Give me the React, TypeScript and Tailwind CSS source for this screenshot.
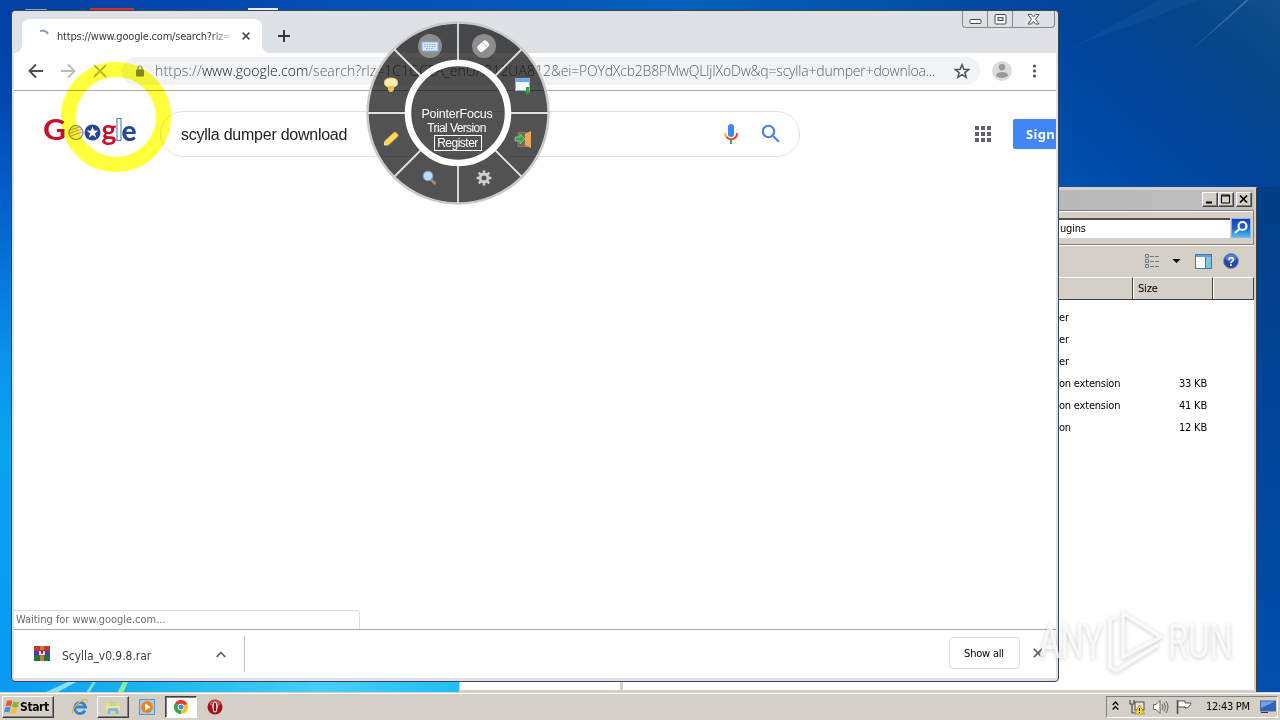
import React from "react";

const tahoma = "font-['DejaVu_Sans_Condensed','Noto_Sans',sans-serif] [font-stretch:condensed]";

function Wallpaper() {
  return (
    <svg className="absolute inset-0" width="1280" height="720">
      <defs>
        <linearGradient id="wl" x1="0" y1="0" x2="0" y2="1">
          <stop offset="0" stopColor="#033fa3" />
          <stop offset="0.14" stopColor="#0248b0" />
          <stop offset="0.32" stopColor="#0468d0" />
          <stop offset="0.5" stopColor="#0b93e8" />
          <stop offset="0.62" stopColor="#0aa4f0" />
          <stop offset="1" stopColor="#0a98f2" />
        </linearGradient>
        <linearGradient id="wt" x1="0" y1="0" x2="1" y2="0">
          <stop offset="0" stopColor="#0340a3" />
          <stop offset="0.35" stopColor="#0650b4" />
          <stop offset="0.65" stopColor="#0560b8" />
          <stop offset="1" stopColor="#03459a" />
        </linearGradient>
        <linearGradient id="wr" x1="0" y1="1" x2="1" y2="0">
          <stop offset="0" stopColor="#0052b2" />
          <stop offset="0.45" stopColor="#01449a" />
          <stop offset="0.75" stopColor="#054588" />
          <stop offset="1" stopColor="#12508c" />
        </linearGradient>
        <linearGradient id="we" x1="0" y1="0" x2="0" y2="1">
          <stop offset="0" stopColor="#023e86" />
          <stop offset="0.5" stopColor="#00459a" />
          <stop offset="1" stopColor="#0250ae" />
        </linearGradient>
        <linearGradient id="wb" x1="0" y1="0" x2="1" y2="0">
          <stop offset="0" stopColor="#0a9af2" />
          <stop offset="0.3" stopColor="#18b4ee" />
          <stop offset="0.7" stopColor="#48cef8" />
          <stop offset="1" stopColor="#22bcf6" />
        </linearGradient>
      </defs>
      <rect width="1280" height="720" fill="#00459a" />
      <rect width="20" height="720" fill="url(#wl)" />
      <rect width="1059" height="12" fill="url(#wt)" />
      <rect x="1058" width="222" height="190" fill="url(#wr)" />
      <rect x="1250" y="187" width="30" height="510" fill="url(#we)" />
      <rect y="680" width="460" height="14" fill="url(#wb)" />
      <path d="M44 693L72 680H80L56 693Z" fill="#b5e8fb" opacity=".8" />
      <path d="M86 693L94 680H97L89 693Z" fill="#8cdcf8" />
      <path d="M117 693L124 680H129L123 693Z" fill="#8ee6a8" />
      <path d="M1186 55L1246 0H1249Z" fill="#6d9cca" opacity=".45" />
      <path d="M1070 48L1160 0H1200Z" fill="#1d66a8" opacity=".25" />
      <rect x="90" y="8" width="44" height="3" fill="#d2322a" />
      <rect x="25" y="9" width="22" height="2" fill="#8ca6c8" />
      <rect x="248" y="8" width="30" height="3" fill="#e6eef6" />
    </svg>
  );
}

function ClassicButton({ children }: { children: React.ReactNode }) {
  return (
    <div className="flex h-[15px] w-4 items-center justify-center border border-b-[#404040] border-l-white border-r-[#404040] border-t-white bg-[#d4d0c8] shadow-[inset_-1px_-1px_0_#808080]">
      <svg width="14" height="13" viewBox="0 0 14 13" fill="none" stroke="#000">
        {children}
      </svg>
    </div>
  );
}

const rows = [
  ["er", ""],
  ["er", ""],
  ["er", ""],
  ["on extension", "33 KB"],
  ["on extension", "41 KB"],
  ["on", "12 KB"],
];

function Explorer() {
  return (
    <div className={`absolute left-[459px] top-[187px] flex h-[506px] w-[798px] flex-col border border-b-[#d4d0c8] border-l-[#d4d0c8] border-r-[#404040] border-t-[#d4d0c8] bg-[#d4d0c8] pr-[2px] text-[11px] tracking-[-0.2px] text-black ${tahoma}`}>
      <div className="mt-[2px] flex h-5 items-center justify-end bg-gradient-to-r from-[#808080] via-[#b0b0b0] to-[#c0c0c0] pb-[1px] pr-[2px]">
        <ClassicButton><path d="M3 9.5h6" strokeWidth="2" /></ClassicButton>
        <ClassicButton><path d="M2.500 2h8v8h-8zM2 3h9" /></ClassicButton>
        <div className="w-[2px]" />
        <ClassicButton><path d="M3 2.500l7 7M10 2.500l-7 7" strokeWidth="1.700" /></ClassicButton>
      </div>
      <div className="flex h-[35px] items-center justify-end border-y border-r border-[#808080] pr-[2px] shadow-[inset_0_1px_0_#fff,0_1px_0_#fff]">
        <div className="flex h-5 flex-1 items-center border-t-2 border-[#505050] bg-white pl-[600px] pt-[1px]">ugins</div>
        <div className="ml-[1px] flex h-5 w-5 items-center justify-center border border-[#8ab4e8] bg-gradient-to-b from-[#1c3fb8] via-[#2060d0] to-[#4ec0f0]">
          <svg width="18" height="18" viewBox="0 0 18 18" fill="none" stroke="#fff" strokeWidth="2.200">
            <circle cx="10.500" cy="7" r="4" />
            <path d="M7.500 10L3 14" />
          </svg>
        </div>
      </div>
      <div className="flex h-8 items-center justify-end pr-[15px]">
        <svg width="16" height="14" viewBox="0 0 16 14" fill="none" stroke="#6c7888">
          <path d="M1.500.5h3v3h-3zM1.500 5.500h3v3h-3zM1.500 10.500h3v3h-3z" />
          <path d="M6 2.500h4m1 0h4M6 7.500h4m1 0h4M6 12.500h4m1 0h4" />
        </svg>
        <svg className="ml-3" width="9" height="5"><path d="M.5 0h8l-4 4z" fill="#000" /></svg>
        <svg className="ml-[14px]" width="17" height="15" viewBox="0 0 17 15">
          <rect x=".5" y=".5" width="16" height="14" fill="#fff" stroke="#4a74a8" />
          <rect x="1" y="1" width="15" height="2" fill="#6a9cd0" />
          <rect x="11" y="3" width="5" height="11" fill="#7cc8e0" />
          <path d="M10.500 3v11" stroke="#4a74a8" />
        </svg>
        <svg className="ml-[11px]" width="16" height="16" viewBox="0 0 16 16">
          <circle cx="8" cy="8" r="7.500" fill="#2448a8" stroke="#8090b0" />
          <ellipse cx="8" cy="5" rx="5.500" ry="3.500" fill="#5880d8" />
          <text x="8" y="12.500" textAnchor="middle" fontSize="12" fontWeight="700" fill="#fff" fontFamily="Liberation Sans">?</text>
        </svg>
      </div>
      <div className="flex h-[23px] items-center justify-end border-b border-[#404040]">
        <div className="h-full w-[79px] border-r border-t border-r-[#404040] border-t-white" />
        <div className="flex h-full w-20 items-center border-l border-r border-t border-l-white border-r-[#404040] border-t-white pl-1 pt-[2px]">Size</div>
        <div className="h-full w-[41px] border-l border-r border-t border-l-white border-r-[#404040] border-t-white" />
      </div>
      <div className="flex min-h-0 flex-1">
        <div className="w-40 bg-white" />
        <div className="w-[3px] bg-[#d4d0c8]" />
        <div className="flex-1 bg-white pt-[7px]">
          {rows.map(([type, size], i) => (
            <div key={i} className="flex h-[22px] items-center justify-end pr-[47px]">
              <span className="w-[100px]">{type}</span>
              <span className="w-[48px] text-right">{size}</span>
            </div>
          ))}
        </div>
      </div>
      <div className="h-[2px]" />
    </div>
  );
}

function TabStrip() {
  return (
    <div className="flex h-[42px] items-start bg-[#dee1e6]">
      <div className="h-full w-2 pt-[34px]">
        <svg width="8" height="8"><path d="M8 0v8H0a8 8 0 0 0 8-8z" fill="#fff" /></svg>
      </div>
      <div className="mt-2 flex h-[34px] w-[240px] items-center rounded-t-lg bg-white pl-[14px]">
        <svg width="14" height="14" viewBox="0 0 14 14" fill="none"><path d="M4 2.200A6 6 0 0 1 12 5" stroke="#8a9ab8" strokeWidth="2" /></svg>
        <div className={`ml-[7px] w-[173px] overflow-hidden whitespace-nowrap bg-gradient-to-r from-[#303338] from-88% to-white to-[102%] bg-clip-text pt-[2px] text-[11px] tracking-[-0.21px] text-transparent ${tahoma}`}>
          https://www.google.com/search?rlz=
        </div>
        <svg className="ml-[12px]" width="8" height="8" viewBox="0 0 9 9"><path d="M.7.700l7.600 7.600M8.300.7L.7 8.300" stroke="#4a4d52" strokeWidth="1.800" /></svg>
      </div>
      <div className="h-full w-2 pt-[34px]">
        <svg width="8" height="8"><path d="M0 0v8h8a8 8 0 0 1-8-8z" fill="#fff" /></svg>
      </div>
      <svg className="ml-2 mt-[19px]" width="12" height="12"><path d="M6 0v12M0 6h12" stroke="#303338" strokeWidth="1.900" /></svg>
      <div className="flex-1" />
      <div className="mr-[1px] flex h-[17px] w-[93px] rounded-b-[4px] border border-t-0 border-[#85888e]">
        <div className="flex w-[25px] items-center justify-center border-r border-[#85888e] pt-[5px]">
          <svg width="13" height="6"><rect x="1" y=".5" width="11" height="4" rx="1" fill="#fff" stroke="#44474f" /></svg>
        </div>
        <div className="flex w-[25px] items-center justify-center border-r border-[#85888e]">
          <svg width="13" height="11"><rect x="1" y=".5" width="11" height="9.500" rx="1" fill="#fff" stroke="#44474f" /><rect x="4" y="3.500" width="5" height="3" fill="#dee1e6" stroke="#44474f" /></svg>
        </div>
        <div className="flex flex-1 items-center justify-center">
          <svg width="13" height="11" viewBox="0 0 13 11"><path d="M1 .5h3.500L6.500 3l2-2.500H12L8.500 5.200 12 10H8.500l-2-2.600L4.500 10H1l3.500-4.800z" fill="#fff" stroke="#44474f" strokeWidth=".9" /></svg>
        </div>
      </div>
    </div>
  );
}

function Toolbar() {
  return (
    <div className="flex h-[38px] items-center border-b border-[#a9aaac] bg-white pl-[14px]">
      <svg className="-mt-[2px]" width="16" height="16" viewBox="0 0 16 16" fill="none" stroke="#4d5156" strokeWidth="2"><path d="M15 8H2M8 1.500L1.500 8 8 14.500" /></svg>
      <svg className="-mt-[2px] ml-4" width="16" height="16" viewBox="0 0 16 16" fill="none" stroke="#b9bbbe" strokeWidth="1.900"><path d="M1 8h13M8 1.500L14.500 8 8 14.500" /></svg>
      <svg className="-mt-[2px] ml-[17px]" width="14" height="14" viewBox="0 0 14 14" stroke="#b4b6b8" strokeWidth="1.800"><path d="M1 1l12 12M13 1L1 13" /></svg>
      <div className="-mt-px ml-[15px] flex h-7 w-[858px] items-center rounded-full bg-[#f1f3f4] pl-[13px]">
        <svg width="10" height="12" viewBox="0 0 10 12"><rect x="1" y="4.500" width="8" height="7" rx="1" fill="#85888c" /><path d="M3 5V3a2 2 0 0 1 4 0v2" fill="none" stroke="#85888c" strokeWidth="1.200" /></svg>
        <div className="ml-[10px] w-[790px] whitespace-nowrap pb-[1px] font-['Open_Sans',sans-serif] text-[14px] font-light text-[#5f6368]">
          <span className="tracking-[0.2px]">https://</span>
          <span className="tracking-[0.02px] text-[#202124]">www.google.com</span>
          <span className="tracking-[0.02px]">/search?rlz=1C1GCEA_enUA812UA812</span>
          <span className="tracking-[-0.19px]">&amp;ei=POYdXcb2B8PMwQLljIXoDw&amp;q=scylla+dumper+downloa...</span>
        </div>
        <svg className="ml-[9px]" width="16" height="16" viewBox="0 0 16 16"><path d="M8 1.700l1.800 4.500 4.900.3-3.800 3.100 1.300 4.700L8 11.700l-4.200 2.600 1.300-4.700L1.300 6.500l4.900-.3z" fill="none" stroke="#505358" strokeWidth="1.500" /></svg>
      </div>
      <svg className="-mt-px ml-3" width="20" height="20" viewBox="0 0 20 20"><circle cx="10" cy="10" r="10" fill="#dcdcdc" /><circle cx="10" cy="6.200" r="3.200" fill="#9a9a9a" /><ellipse cx="10" cy="14" rx="6" ry="3" fill="#9a9a9a" /></svg>
      <svg className="-mt-px ml-5" width="5" height="14" viewBox="0 0 5 14" fill="#4d5156"><circle cx="2.500" cy="2" r="1.600" /><circle cx="2.500" cy="7" r="1.600" /><circle cx="2.500" cy="12" r="1.600" /></svg>
    </div>
  );
}

function Doodle() {
  return (
    <svg className="shrink-0 overflow-visible" width="94" height="48" viewBox="0 0 94 48" fontFamily="Lato, sans-serif">
      <text x="0" y="30" fontSize="29" fontWeight="700" fill="#c8102e" textLength="23" lengthAdjust="spacingAndGlyphs">G</text>
      <circle cx="33" cy="22.500" r="7" fill="#f3eedc" stroke="#85857c" strokeWidth="1.200" />
      <path d="M27 20l10-3M27 23l12-4M28 26l11-4" stroke="#c0a058" strokeWidth="1.200" />
      <circle cx="49.500" cy="22.500" r="8" fill="#24479a" />
      <path d="M49.500 16.500l1.500 4.100 4.300.1-3.400 2.600 1.200 4.200-3.600-2.500-3.600 2.500 1.200-4.200-3.400-2.600 4.300-.1z" fill="#fff" />
      <text x="58.500" y="30" fontSize="28" fontWeight="700" fill="#c8102e" textLength="15" lengthAdjust="spacingAndGlyphs">g</text>
      <rect x="74" y="8.500" width="4" height="22" fill="#fff" stroke="#5f78b0" strokeWidth="1.100" />
      <text x="78.500" y="30.500" fontSize="28" fontWeight="900" fill="#24479a" textLength="15" lengthAdjust="spacingAndGlyphs">e</text>
    </svg>
  );
}

function Page() {
  return (
    <div className="flex min-h-0 flex-1 flex-col justify-between overflow-hidden bg-white">
      <div className="mt-[19px] flex h-[48px] items-center pl-[29px]">
        <Doodle />
        <div className="ml-[23px] flex h-[46px] w-[640px] shrink-0 items-center rounded-full border border-[#dfe1e5] pl-[20px]">
          <span className="w-[538px] pt-[1px] font-['Liberation_Sans',sans-serif] text-[16px] tracking-[-0.25px] text-[#222]">scylla dumper download</span>
          <svg width="24" height="24" viewBox="0 0 24 24" fill="none" strokeWidth="2">
            <rect x="9" y="2" width="6" height="13" rx="3" fill="#4285f4" />
            <path d="M12 18v4" stroke="#34a853" />
            <path d="M6 11a6 6 0 0 0 2 4.500" stroke="#fbbc05" />
            <path d="M7.500 15.200A6 6 0 0 0 18 11" stroke="#ea4335" />
          </svg>
          <svg className="ml-[18px]" width="20" height="20" viewBox="0 0 20 20" fill="none" stroke="#4a7fe0" strokeWidth="2.100"><circle cx="7.500" cy="7.500" r="5.700" /><path d="M11.800 11.800l6 6" /></svg>
        </div>
        <svg className="ml-[175px] shrink-0" width="16" height="16" fill="#5f6368">
          {[0, 6, 12].map((y) => [0, 6, 12].map((x) => <rect key={`${x}-${y}`} x={x} y={y} width="4" height="4" />))}
        </svg>
        <div className="ml-[22px] flex h-[30px] w-[96px] shrink-0 items-center rounded-[2px] bg-[#4285f4] pl-[13px] pt-[2px] font-['Noto_Sans',sans-serif] text-[13px] font-bold tracking-[0.3px] text-white">Sign</div>
      </div>
      <div className={`flex h-[19px] w-[346px] items-center rounded-tr border-r border-t border-[#dadce0] pl-[2px] pt-[1px] text-[11px] tracking-[-0.04px] text-[#6a6d72] ${tahoma}`}>
        Waiting for www.google.com...
      </div>
    </div>
  );
}

function RarIcon() {
  return (
    <svg className="-mt-[3px]" width="16" height="16" viewBox="0 0 16 16">
      <rect width="16" height="5" y="1" fill="#c03830" />
      <rect width="16" height="5" y="6" fill="#3a4aa8" />
      <rect width="16" height="5" y="11" fill="#207838" />
      <path d="M6 1h4v15H6z" fill="#c87840" />
      <rect x="4.500" y="5" width="7" height="6" fill="#8a3030" />
      <path d="M6 6v3.500h4V6" fill="none" stroke="#fff" strokeWidth="1.500" />
    </svg>
  );
}

function Shelf() {
  return (
    <div className={`flex h-[49px] items-center border-t border-[#a9aaac] bg-white pl-5 text-[#3c4043] ${tahoma}`}>
      <RarIcon />
      <span className="ml-3 w-[154px] pt-[3px] text-[12px] tracking-[-0.05px]">Scylla_v0.9.8.rar</span>
      <svg width="10" height="7" viewBox="0 0 10 7" fill="none" stroke="#5f6368" strokeWidth="1.800"><path d="M.7 6L5 1.500 9.300 6" /></svg>
      <div className="ml-[18px] h-9 w-px bg-[#c0c2c5]" />
      <div className="flex-1" />
      <div className="-mt-[2px] flex h-8 w-[71px] items-center justify-center rounded border border-[#dadce0] pr-[1px] pt-[2px] text-[11px] tracking-[-0.2px] text-black">Show all</div>
      <svg className="-mt-[2px] ml-[13px] mr-[13px]" width="10" height="10" viewBox="0 0 10 10"><path d="M.8.800l8.400 8.400M9.200.8L.8 9.200" stroke="#5f6368" strokeWidth="1.700" /></svg>
    </div>
  );
}

function Browser() {
  return (
    <div className="absolute left-[11px] top-[10px] flex h-[672px] w-[1048px] flex-col rounded-[4px] border border-[#3c4450] bg-[#dee1e6] px-[2px] pb-[3px]">
      <TabStrip />
      <Toolbar />
      <Page />
      <Shelf />
    </div>
  );
}

function Wheel() {
  return (
    <div className="absolute left-[366px] top-[21px] flex h-[184px] w-[184px] flex-col items-center pt-[86px] font-['Liberation_Sans',sans-serif] text-white">
      <svg className="absolute inset-0" width="184" height="184" viewBox="-92 -92 184 184">
        <circle r="90.500" fill="#000" fillOpacity=".68" stroke="#c9c9c9" strokeWidth="2.500" />
        <g stroke="#e2e2e2" strokeWidth="1.800">
          <path d="M0-90v40M0 50v40M-90 0h40M50 0h40M-63.500-63.500l26 26M63.500-63.500l-26 26M-63.500 63.500l26-26M63.500 63.500l-26-26" />
        </g>
        <circle r="50" fill="none" stroke="#fff" strokeWidth="6.500" />
        <circle cx="-28" cy="-67" r="12" fill="#8d8d8d" />
        <circle cx="26" cy="-67" r="12" fill="#8d8d8d" />
        <rect x="-36" y="-71" width="16" height="9" fill="#dceafa" stroke="#8ab4e6" />
        <path d="M-34-68.500h12M-34-66.500h12M-32-64.500h8" stroke="#88aeda" strokeDasharray="1.500 1" />
        <g transform="translate(25 -67) rotate(-42)"><rect x="-6" y="-3.500" width="12" height="7.500" rx="2.500" fill="#fff" /><path d="M2-3.500v7" stroke="#c8c8c8" /></g>
        <path d="M-70-26a4 4 0 0 1-3.500-4.500q0-4.500 6.500-4.500t6.500 4.500a4 4 0 0 1-3.500 4.500z" fill="#ffeeb8" stroke="#f0c860" />
        <path d="M-70-27h6v4l-2 2h-2l-2-2z" fill="#f0c040" />
        <g transform="translate(-67 26) rotate(-42)"><rect x="-7" y="-2.800" width="15" height="5.600" rx="1.500" fill="#ffd860" stroke="#d8a030" strokeWidth=".8" /><path d="M-7-2.500L-9.500 0l2.500 2.500z" fill="#f0e8d0" /></g>
        <rect x="57.500" y="-34.500" width="14" height="12" fill="#f4faff" stroke="#88b0dc" />
        <rect x="58" y="-34" width="13" height="3" fill="#6aa8e8" />
        <path d="M68-26h3v4h2l-3.500 3.500L66-22h2z" fill="#32a832" />
        <path d="M60 19.500h11v14H60z" fill="#75695e" stroke="#8c7860" /><path d="M67 21l6-3v17l-6-3z" fill="#eaa858" />
        <path d="M57 24h5v-3l5 5-5 5v-3h-5z" fill="#38a840" stroke="#a8e0a0" strokeWidth=".6" />
        <circle cx="-30" cy="63" r="4.800" fill="#b8dcfa" stroke="#78a8dc" />
        <path d="M-26.500 67l4 4" stroke="#b08a60" strokeWidth="2.500" />
        <g transform="translate(26 65)" stroke="#cfcfcf" fill="none"><circle r="4" strokeWidth="2.800" /><path d="M0-7.500v3M0 4.500v3M-7.500 0h3M4.500 0h3M-5.300-5.300l2 2M5.300-5.300l-2 2M-5.300 5.300l2-2M5.300 5.300l-2-2" strokeWidth="2.500" /></g>
      </svg>
      <span className="relative -ml-[2px] text-[12.5px] leading-[14px] tracking-[-0.2px]">PointerFocus</span>
      <span className="relative -ml-[3px] text-[12px] leading-[14px] tracking-[-0.6px]">Trial Version</span>
      <span className="relative flex h-4 w-12 items-center justify-center border border-white pr-[1px] text-[12px] leading-[14px] tracking-[-0.5px]">Register</span>
    </div>
  );
}

function Watermark() {
  return (
    <svg className="absolute left-[1030px] top-[603px] overflow-visible drop-shadow-[0_1px_2px_rgba(0,0,0,0.26)]" width="220" height="72" viewBox="0 0 220 72" fontFamily="Roboto, sans-serif" fontSize="48" fill="#fff" fillOpacity=".75">
      <text x="9" y="55" textLength="64" lengthAdjust="spacingAndGlyphs">ANY</text>
      <text x="138" y="55" textLength="65" lengthAdjust="spacingAndGlyphs">RUN</text>
      <g fill="none" stroke="#fff" strokeOpacity=".8" strokeWidth="3.500" strokeLinejoin="round">
        <path d="M93 10L131 34 93 54z" />
        <path d="M86 14l-6 3v47l6 4 42-26" />
      </g>
    </svg>
  );
}

function Taskbar() {
  return (
    <div className={`absolute left-0 top-[692px] flex h-7 w-[1280px] items-center border-t border-[#d4d0c8] bg-[#d4cfc7] pl-[2px] pt-[1px] shadow-[inset_0_1px_0_#fff,0_1px_0_#d4cfc7] ${tahoma}`}>
      <div className="flex h-[22px] w-[52px] items-center border border-b-[#404040] border-l-white border-r-[#404040] border-t-white pl-[1px] shadow-[inset_-1px_-1px_0_#808080]">
        <svg width="16" height="16" viewBox="0 0 16 16">
          <path d="M3 2q3-1.500 5.500 0L7 7.500Q4.500 6 1.500 7.500z" fill="#e85a28" />
          <path d="M9.300 2.500q3 1.300 6 0L13.700 8q-3 1.200-5.700 0z" fill="#84b830" />
          <path d="M1.300 8.300Q4 7 6.700 8.300L5.300 13.500Q3 12.500 0 13.500z" fill="#4a90e0" />
          <path d="M7.600 8.900q3 1.200 5.800 0L12 14.300q-3 1.200-5.800 0z" fill="#f8c030" />
        </svg>
        <span className="text-[12px] font-bold tracking-[-0.4px] text-black">Start</span>
      </div>
      <svg className="ml-[17px]" width="18" height="18" viewBox="0 0 18 18" fill="none">
        <path d="M14 12.500A5.500 5.500 0 1 1 14.500 9H5" stroke="#2a84d8" strokeWidth="2.800" />
        <path d="M2 15.500C-1 13 7 3 14 1.500q3-.5 2 3" stroke="#e8b830" strokeWidth="1.300" />
      </svg>
      <div className="ml-2 flex h-[22px] w-8 items-center justify-center border border-b-[#404040] border-l-white border-r-[#404040] border-t-white shadow-[inset_-1px_-1px_0_#808080]">
        <svg width="16" height="16" viewBox="0 0 16 16"><path d="M1 3l5-1 1 2h7v10H1z" fill="#f2d676" /><path d="M5 2h6v5H5z" fill="#b8dca0" /><path d="M1 7h14v5H1z" fill="#f8e49a" /><path d="M2.500 15v-4q0-2 2-2h7q2 0 2 2v4h-3v-3h-5v3z" fill="#78bce8" /></svg>
      </div>
      <svg className="ml-[10px]" width="16" height="16" viewBox="0 0 16 16"><rect x=".5" y=".5" width="15" height="15" fill="#a8ccec" stroke="#5a94c8" /><circle cx="8" cy="8" r="6" fill="#f08418" /><path d="M6 4.500L11.500 8 6 11.500z" fill="#fff" /></svg>
      <div className="ml-[10px] flex h-[22px] w-8 items-center justify-center border border-b-white border-l-[#404040] border-r-white border-t-[#404040] bg-white shadow-[inset_1px_1px_0_#808080]">
        <svg width="14" height="14" viewBox="-7 -7 14 14"><circle r="7" fill="#fbc116" /><path d="M0 0L-6.060-3.500A7 7 0 0 1 6.060-3.500z" fill="#e33b2e" /><path d="M0 0L-6.060-3.500A7 7 0 0 0 0 7z" fill="#2da94f" /><circle r="3.300" fill="#fff" /><circle r="2.500" fill="#4285f4" /></svg>
      </div>
      <svg className="ml-[10px]" width="16" height="16" viewBox="0 0 16 16"><circle cx="8" cy="8" r="7.500" fill="#a81018" /><ellipse cx="8" cy="4.500" rx="5.500" ry="3.500" fill="#d04848" /><ellipse cx="8" cy="8" rx="2.600" ry="5.500" fill="#fff" /><ellipse cx="8" cy="8" rx="1.300" ry="4.500" fill="#8c1018" /></svg>
      <div className="flex-1" />
      <div className="mr-[2px] flex h-[22px] w-[172px] items-center border border-b-white border-l-[#808080] border-r-white border-t-[#808080] pl-[5px]">
        <svg className="-mt-[2px]" width="7" height="10" viewBox="0 0 7 10" fill="none" stroke="#000" strokeWidth="1.300"><path d="M.7 4l2.800-3 2.800 3M.7 8.500l2.800-3 2.800 3" /></svg>
        <svg className="ml-[10px]" width="16" height="16" viewBox="0 0 16 16"><rect x="6" y="3" width="9" height="8" fill="#e0e0d8" stroke="#505050" /><path d="M1 1v4h4V1M3 5v9h5" fill="none" stroke="#505050" strokeWidth="1.200" /><path d="M10.500 6l5 9h-10z" fill="#f8d820" stroke="#907808" strokeWidth=".6" /><path d="M10.500 9v3M10.500 13v1" stroke="#000" /></svg>
        <svg className="ml-[7px]" width="17" height="16" viewBox="0 0 17 16" fill="none" stroke="#666"><path d="M1.500 5.500h2.500L8 1.500v13L4 10.500H1.500z" fill="#fff" /><path d="M10 5q2 3 0 6M12 3.500q3 4.500 0 9M14 2q4 6 0 12" /></svg>
        <svg className="ml-[7px]" width="16" height="16" viewBox="0 0 16 16" fill="#fff" stroke="#555"><path d="M1.500 1v14" strokeWidth="1.600" /><path d="M2 2h7v2h6q-1.500 5-6 5V8H2z" /></svg>
        <span className="ml-[14px] w-[54px] whitespace-nowrap pt-[1px] text-[11px] tracking-[-0.3px] text-black">12:43 PM</span>
        <svg width="16" height="14" viewBox="0 0 16 14"><rect x=".5" y="1" width="15" height="10" fill="#2c62c0" stroke="#506888" /><path d="M1 1.500h14L1 8z" fill="#6aa4e8" /><path d="M1 12.500h7" stroke="#303848" /></svg>
      </div>
    </div>
  );
}

export default function App() {
  return (
    <div className="relative h-[720px] w-[1280px] overflow-hidden bg-[#00459a]">
      <Wallpaper />
      <Explorer />
      <Browser />
      <div className="absolute left-[61px] top-[62px] h-[110px] w-[110px] rounded-full border-[15px] border-[#ffff3c] mix-blend-multiply" />
      <Wheel />
      <Watermark />
      <Taskbar />
    </div>
  );
}
